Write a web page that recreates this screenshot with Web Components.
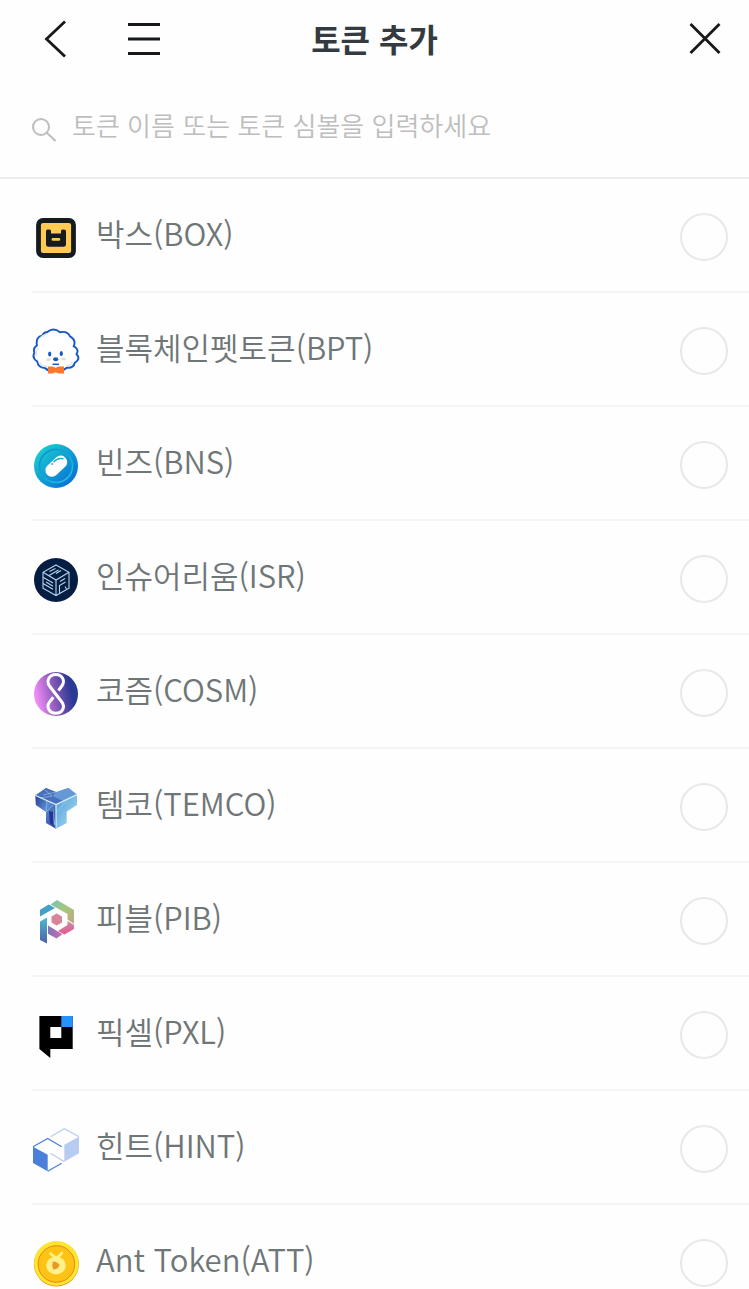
<!DOCTYPE html>
<html lang="ko">
<head>
<meta charset="utf-8">
<meta name="viewport" content="width=device-width, initial-scale=1">
<title>토큰 추가</title>
<style>
  body {
    margin: 0;
    background: #fefefe;
    color: #6f7677;
    font-family: "Noto Sans CJK KR", "Noto Sans", sans-serif;
  }
</style>
</head>
<body>
<token-page>
  <page-header slot="header">토큰 추가</page-header>
  <token-search slot="search" placeholder="토큰 이름 또는 토큰 심볼을 입력하세요"></token-search>

  <token-item icon="box">박스(BOX)</token-item>
  <token-item icon="bpt">블록체인펫토큰(BPT)</token-item>
  <token-item icon="bns">빈즈(BNS)</token-item>
  <token-item icon="isr">인슈어리움(ISR)</token-item>
  <token-item icon="cosm">코즘(COSM)</token-item>
  <token-item icon="temco">템코(TEMCO)</token-item>
  <token-item icon="pib">피블(PIB)</token-item>
  <token-item icon="pxl">픽셀(PXL)</token-item>
  <token-item icon="hint">힌트(HINT)</token-item>
  <token-item icon="att">Ant Token(ATT)</token-item>
</token-page>

<script>
// 48x48 logos
const ICONS = {
  box: `
    <rect x="6.5" y="6.5" width="35" height="35" rx="4.5" fill="#ffcb52" stroke="#151c20" stroke-width="4.8"/>
    <path d="M15.500 15.400h2q1.500 0 1.500 1.500v2.600h10v-2.600q0-1.500 1.500-1.500h1.500q2 0 2 2v13q0 2.400-2.400 2.400H16.400q-2.400 0-2.400-2.400v-13q0-2 1.500-2z" fill="#151c20"/>
    <rect x="19.600" y="24" width="8.600" height="2.800" rx="1.200" fill="#ffcb52"/>`,
  bpt: `
    <path d="M15.300 4Q21.500-1 28 4.200 35.500 2.800 38 8.300 44.500 12 41.700 18.200 47.500 21.500 44.500 26 49 31 42.800 34.800 41.500 40.500 34.700 39.700 30 44 24 42.500 17 44 13 40 6 39.500 5.300 33.500-.5 30 2.500 24.500 .5 20.500 4.900 17.500 3.500 8.500 10.500 7.500 12 4 15.300 4z" fill="#fff" stroke="#1658c5" stroke-width="1.900"/>
    <path d="M16 6Q10 7 8.500 10M6 20Q3 24 4.500 28M8 35q3 4 8 3.500M34 38q5 0 6.500-4" fill="none" stroke="#e3e5e8" stroke-width="1.600"/>
    <ellipse cx="17.700" cy="26" rx="1.600" ry="2.500" fill="#1658c5"/>
    <ellipse cx="29.300" cy="25.500" rx="1.600" ry="2.500" fill="#1658c5"/>
    <ellipse cx="23.700" cy="31.200" rx="2.600" ry="2" fill="#1658c5"/>
    <path d="M20.500 36.300h6.500" stroke="#1658c5" stroke-width="1.500"/>
    <path d="M14.500 31.500h4M29.500 31h4" stroke="#dcdee2" stroke-width="2.500"/>
    <path d="M16 38.500h4.500l3 1.300 3-1.300H32v7h-5.500l-3-1.300-3 1.300H16z" fill="#ff762f"/>`,
  bns: `
    <defs>
      <linearGradient id="a" x1="0" y1="0" x2="1" y2="1"><stop offset=".1" stop-color="#19cdd1"/><stop offset=".9" stop-color="#096ed7"/></linearGradient>
      <linearGradient id="b" x1="0" y1="0" x2="1" y2="1"><stop stop-color="#078bc8"/><stop offset="1" stop-color="#21c9df"/></linearGradient>
    </defs>
    <circle cx="24" cy="24" r="22" fill="url(#a)"/>
    <circle cx="24" cy="24" r="16.500" fill="none" stroke="url(#b)" stroke-width="1.600"/>
    <rect x="11.800" y="17.700" width="25" height="13" rx="6.500" fill="#fff" transform="rotate(-43 24.300 24.200)"/>
    <path d="M22 19.800Q26 15.200 31 16.800" fill="none" stroke="#14b6d3" stroke-width="1.500" stroke-linecap="round"/>
    <circle cx="20.200" cy="22" r=".9" fill="#14b6d3"/>`,
  isr: `
    <circle cx="24" cy="24" r="22" fill="#051d43"/>
    <g fill="none" stroke="#b5d4ea" stroke-width="1.100">
      <path d="M24 9l13 7.300v16L24 39.500l-13-7.200v-16zM11 16.300L24 24l13-7.700M24 24v15.500"/>
      <path d="M17.500 15.500l6-3M17 19.500l9.500-5.500M24 17.500l5-3M11 21.300l10 5.800M14 26l7 4.200M11 27.500l10 5.800M27.500 37v-7.500l6-3.500M28 25.500l5-3M33 30.500l1.500 2.500"/>
    </g>`,
  cosm: `
    <defs><linearGradient id="a" x1="0" y1=".6" x2="1" y2=".4"><stop offset=".05" stop-color="#f18bf6"/><stop offset=".5" stop-color="#8055b4"/><stop offset=".85" stop-color="#293995"/></linearGradient></defs>
    <circle cx="24" cy="24" r="22" fill="url(#a)"/>
    <path d="M26.500 20.500L29.800 16C33.500 11 30.500 4.500 23.800 4.500S14 11 17.500 16L29.800 32C33.500 37 30.500 43.300 23.800 43.300S14 37 17.500 32L21.300 27.300" fill="none" stroke="#fff" stroke-width="3"/>`,
  temco: `
    <defs>
      <linearGradient id="a" x1="0" y1="0" x2="1" y2="1"><stop stop-color="#263c99"/><stop offset=".45" stop-color="#5b8cd0"/><stop offset="1" stop-color="#273b98"/></linearGradient>
      <linearGradient id="b" x1="0" y1="0" x2="1" y2="1"><stop stop-color="#559bd9"/><stop offset="1" stop-color="#a8e2f3"/></linearGradient>
    </defs>
    <path d="M3.300 11.500L14 4l10 4 12.500-4.300L45 10.500 24 20.500z" fill="#6698d7"/>
    <path d="M3.300 11.500L14 4l10 4-3.500 4L31 17l-7 3.500z" fill="#496fbd"/>
    <path d="M3.300 11.500L24 20.500v24.200l-10-5.700V28L3.800 21z" fill="url(#a)"/>
    <path d="M24 20.500l21-9.500v10l-10.300 6.500V39L24 44.700z" fill="url(#b)"/>
    <path d="M13 6l7 6-12 2M24 8L11 11M15 17l-1 11 7-7M37 14l-12 14" fill="none" stroke="#b7def5" stroke-width=".7" opacity=".7"/>
    <path d="M17 27l4 1v13l-3-2z" fill="#223493"/><path d="M21 22l2 18-1 2z" fill="#8bc6ed"/>
    <path d="M3.500 11.500L24 20.500l21-10M24 20.500v23.500" fill="none" stroke="#d8f3ff" stroke-width="1.200"/>`,
  pib: `
    <defs>
      <linearGradient id="a" x1="0" y1="0" x2="1" y2="1"><stop stop-color="#77c4b8"/><stop offset=".5" stop-color="#a5c77c"/><stop offset="1" stop-color="#c5a384"/></linearGradient>
      <linearGradient id="b" x1="0" y1="0" x2="0" y2="1"><stop stop-color="#4dbacd"/><stop offset="1" stop-color="#4f60a7"/></linearGradient>
      <linearGradient id="c"><stop stop-color="#8173b8"/><stop offset="1" stop-color="#cd6fae"/></linearGradient>
      <linearGradient id="d" x1="0" y1="0" x2="0" y2="1"><stop stop-color="#c48fa4"/><stop offset="1" stop-color="#e85791"/></linearGradient>
    </defs>
    <path d="M18.500 6.500L25 2l17 10v14l-6.500-4.500V16z" fill="url(#a)"/>
    <path d="M8 11.700L16.700 6.500 23 10 8 18.500z" fill="#469fc5"/>
    <path d="M8 23.500l7-4v26L8 42z" fill="url(#b)"/>
    <path d="M16 27.500l14.500 8.800L24.500 40.500 16 35.700z" fill="url(#c)"/>
    <path d="M26 33l9.500-6V23l6.500 4v4L32.500 36.500z" fill="url(#d)"/>
    <path d="M24.700 15.500l5.300 3v6l-5.300 3-5.200-3v-6z" fill="#d98599"/>`,
  pxl: `
    <path d="M7.400 4h33.300v33H18.300v9L7.400 37z"/>
    <path d="M18.300 15h11v11h-11z" fill="#fff"/>
    <path d="M29.300 4h11.400v11H29.300z" fill="#2493ff"/>`,
  hint: `
    <path d="M32.300 18.700L47 10.700v16.600l-14.700 8.400z" fill="#b8cbf1"/>
    <path d="M18.500 10.700l13.800-8 14.700 8M18.500 27.300l13.800 8.400" fill="none" stroke="#b8cbf1" stroke-width="1.200"/>
    <path d="M1 20.700l14.700 8v16.600L1 37z" fill="#4b7fdc"/>
    <path d="M1 20.700l14.700-8.300L29.700 20.700M15.700 45.300l14-8" fill="none" stroke="#4b7fdc" stroke-width="1.300"/>`,
  att: `
    <circle cx="24.400" cy="24" r="22.500" fill="#dc8d2c"/>
    <circle cx="24.400" cy="23.400" r="22.300" fill="#ffe62b"/>
    <circle cx="24.400" cy="24" r="18.300" fill="#ffc315" stroke="#e38625" stroke-width="1"/>
    <path d="M18.500 13.500q2.500 3 5.500 4M30 13q-2.500 3.500-6 5" fill="none" stroke="#fff08a" stroke-width="2.600" stroke-linecap="round"/>
    <ellipse cx="24" cy="25.500" rx="9.800" ry="9" fill="#fff08a"/>
    <path d="M21 21.500q-1.500 5 .5 8 5-.5 6-4.500-2-3.500-6.500-3.500z" fill="#e99624"/>`
};

class TokenPage extends HTMLElement {
  constructor() {
    super();
    this.attachShadow({ mode: 'open' });
  }

  connectedCallback() {
    this.shadowRoot.innerHTML = `
      <style>
        :host {
          display: flex;
          flex-direction: column;
          height: 100vh;
        }
        main {
          flex: 1;
          min-height: 0;
          overflow-y: auto;
          scrollbar-width: none;
        }
      </style>
      <slot name="header"></slot>
      <slot name="search"></slot>
      <main><slot></slot></main>
    `;
  }
}

class PageHeader extends HTMLElement {
  constructor() {
    super();
    this.attachShadow({ mode: 'open' });
  }

  connectedCallback() {
    this.shadowRoot.innerHTML = `
      <style>
        :host {
          display: block;
          flex: none;
        }
        header {
          display: grid;
          grid-template-columns: 1fr auto 1fr;
          align-items: center;
          height: 78px;
          padding: 0 20px;
        }
        nav {
          display: flex;
          gap: 52px;
        }
        h1 {
          margin: 0;
          color: #343b40;
          font-size: 32px;
          font-weight: 700;
          line-height: 46px;
          padding-bottom: 2px;
        }
        button {
          width: 48px;
          height: 48px;
          padding: 0;
          border: 0;
          background: none;
          color: #15191c;
          cursor: pointer;
        }
        .close {
          justify-self: end;
        }
        svg {
          display: block;
          fill: none;
          stroke: currentColor;
          stroke-width: 2.8;
        }
      </style>
      <header>
        <nav>
          <button type="button" aria-label="뒤로">
            <svg width="48" height="48"><path d="M45 6.500L26.500 24 45 41.500"/></svg>
          </button>
          <button type="button" aria-label="메뉴">
            <svg width="48" height="48"><path d="M8 9.500h32M8 24h32M8 38.500h32"/></svg>
          </button>
        </nav>
        <h1><slot></slot></h1>
        <button class="close" type="button" aria-label="닫기">
          <svg width="48" height="48"><path d="M9.500 9l29 29M38.500 9l-29 29"/></svg>
        </button>
      </header>
    `;
  }
}

class TokenSearch extends HTMLElement {
  constructor() {
    super();
    this.attachShadow({ mode: 'open' });
  }

  connectedCallback() {
    const placeholder = this.getAttribute('placeholder');
    this.shadowRoot.innerHTML = `
      <style>
        :host {
          display: block;
          flex: none;
        }
        label {
          display: flex;
          align-items: center;
          gap: 16px;
          padding: 27px 32px 32px;
          border-bottom: 2px solid #ececec;
        }
        svg {
          flex: none;
          margin-top: 10px;
          fill: none;
          stroke: #bdbdbd;
          stroke-width: 2;
        }
        input {
          flex: 1;
          min-width: 0;
          height: 40px;
          padding: 0;
          border: 0;
          outline: 0;
          background: none;
          color: #343b40;
          font: 350 26px/40px "Noto Sans CJK KR", sans-serif;
        }
        input::placeholder {
          color: #bdbdbd;
          opacity: 1;
        }
      </style>
      <label>
        <svg width="24" height="24"><circle cx="9" cy="9" r="8"/><path d="M14.500 14.500l9 8.500"/></svg>
        <input type="text" aria-label="${placeholder}" placeholder="${placeholder}">
      </label>
    `;
  }
}

class TokenItem extends HTMLElement {
  constructor() {
    super();
    this.attachShadow({ mode: 'open' });
  }

  connectedCallback() {
    this.shadowRoot.innerHTML = `
      <style>
        :host {
          display: block;
          padding-left: 32px;
        }
        label {
          display: flex;
          align-items: center;
          gap: 16px;
          height: 112px;
          padding-right: 21px;
          border-bottom: 2px solid #f1f5f8;
          cursor: pointer;
        }
        svg {
          flex: none;
          margin-top: 6px;
        }
        span {
          flex: 1;
          padding-bottom: 4px;
          font-size: 31px;
          font-weight: 350;
          line-height: 48px;
        }
        input {
          appearance: none;
          box-sizing: border-box;
          width: 48px;
          height: 48px;
          margin: 4px 0 0;
          border: 2px solid #e8e8e8;
          border-radius: 50%;
          cursor: pointer;
        }
        input:checked {
          border-color: #1658c5;
          background: #1658c5;
        }
      </style>
      <label>
        <svg width="48" height="48" viewBox="0 0 48 48" aria-hidden="true">${ICONS[this.getAttribute('icon')]}</svg>
        <span><slot></slot></span>
        <input type="checkbox">
      </label>
    `;
  }
}

customElements.define('token-page', TokenPage);
customElements.define('page-header', PageHeader);
customElements.define('token-search', TokenSearch);
customElements.define('token-item', TokenItem);
</script>
</body>
</html>
